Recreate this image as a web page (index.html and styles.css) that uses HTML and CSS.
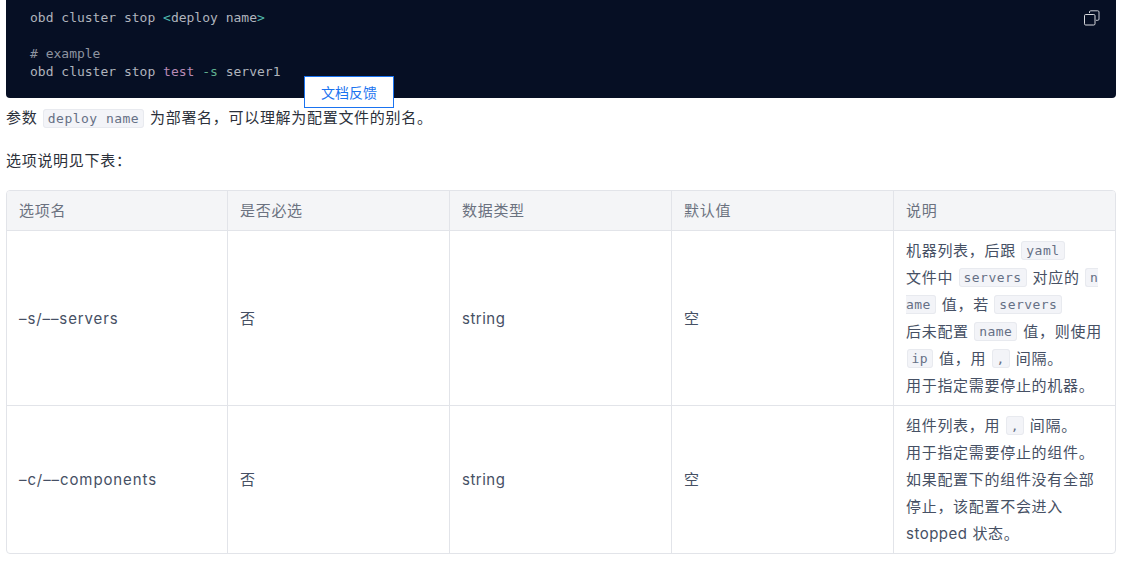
FILE: index.html
```html
<!DOCTYPE html>
<html lang="zh-CN">
<head>
<meta charset="utf-8">
<title>obd cluster stop</title>
<link rel="stylesheet" href="styles.css">
</head>
<body>
<main class="doc">
  <div class="code-block">
    <pre class="code"><span>obd cluster stop </span><span class="tag">&lt;</span><span>deploy name</span><span class="tag">&gt;</span>

<span class="comment"># example</span>
<span>obd cluster stop </span><span class="kw">test</span> <span class="flag">-s</span> <span>server1</span></pre>
    <svg class="copy" width="18" height="18" viewBox="0 0 18 18" fill="none">
      <path d="M6.5 4V3a1.2 1.2 0 0 1 1.2-1.2h7.1A1.2 1.2 0 0 1 16 3v7.1a1.2 1.2 0 0 1-1.2 1.2H13" stroke="#c9ccd3" stroke-width="1"/>
      <rect x="1.5" y="5.5" width="10.5" height="10.5" rx="1.2" stroke="#d8dade" stroke-width="1"/>
    </svg>
  </div>
  <button class="feedback" type="button">文档反馈</button>
  <p class="para first">参数 <code>deploy name</code> 为部署名，可以理解为配置文件的别名。</p>
  <p class="para second">选项说明见下表：</p>
  <div class="table-wrap">
    <table class="options">
      <colgroup><col class="col-first"><col class="col"><col class="col"><col class="col"><col class="col"></colgroup>
      <thead>
        <tr><th>选项名</th><th>是否必选</th><th>数据类型</th><th>默认值</th><th>说明</th></tr>
      </thead>
      <tbody>
        <tr>
          <td class="opt">–s/––servers</td><td>否</td><td class="latin">string</td><td>空</td>
          <td class="desc">机器列表，后跟 <code>yaml</code><br>文件中 <code>servers</code> 对应的 <code>name</code> 值，若 <code>servers</code><br>后未配置 <code>name</code> 值，则使用 <code>ip</code> 值，用 <code>,</code> 间隔。<br>用于指定需要停止的机器。</td>
        </tr>
        <tr>
          <td class="opt">–c/––components</td><td>否</td><td class="latin">string</td><td>空</td>
          <td class="desc">组件列表，用 <code>,</code> 间隔。<br>用于指定需要停止的组件。<br>如果配置下的组件没有全部停止，该配置不会进入 <span class="latin">stopped</span> 状态。</td>
        </tr>
      </tbody>
    </table>
  </div>
</main>
</body>
</html>
```
FILE: styles.css
```css
* { box-sizing: border-box; }
html, body { margin: 0; padding: 0; background: #fff; }
body {
  font-family: Inter, "Noto Sans CJK SC", sans-serif;
  font-size: 15px;
  color: #2b303a;
  overflow: hidden;
}
.doc { position: relative; padding: 0 6px; }
.code-block {
  position: relative;
  background: #060f24;
  border-radius: 0 0 4px 4px;
  height: 98px;
  padding: 9px 24px;
}
.code {
  margin: 0;
  font-family: "DejaVu Sans Mono", "Liberation Mono", monospace;
  font-size: 13px;
  line-height: 18px;
  color: #b0b4bd;
}
.tag { color: #4fb8ad; }
.comment { color: #8e94a0; }
.kw { color: #b98ab5; }
.flag { color: #5fae8e; }
.copy { position: absolute; top: 9px; right: 15px; }
.feedback {
  position: absolute;
  left: 304px;
  top: 76px;
  width: 90px;
  height: 32px;
  padding: 0;
  background: #fff;
  border: 1px solid #1a73f0;
  color: #1a73f0;
  font: 14px "Noto Sans CJK SC", sans-serif;
}
.para { margin: 0; line-height: 24px; letter-spacing: .7px; }
.first { padding-top: 8px; }
.second { padding-top: 19px; }
code {
  font-family: "DejaVu Sans Mono", "Liberation Mono", monospace;
  font-size: 13px;
  line-height: 1;
  color: #667085;
  background: #f3f4f8;
  border: 1px solid #e8eaef;
  border-radius: 3px;
  padding: 1px 4px;
  letter-spacing: .47px;
  margin: 0 1px 0 .5px;
  word-break: break-all;
}
.table-wrap {
  margin-top: 17px;
  border: 1px solid #e2e4e9;
  border-radius: 4px;
  overflow: hidden;
}
.options {
  width: 100%;
  table-layout: fixed;
  border-collapse: separate;
  border-spacing: 0;
}
.col-first { width: 220px; }
.col { width: 222px; }
th, td {
  border-left: 1px solid #e2e4e9;
  padding: 0 12px;
  text-align: left;
  line-height: 27px;
  letter-spacing: .7px;
}
th:first-child, td:first-child { border-left: 0; }
th {
  height: 40px;
  background: #f4f5f7;
  font-weight: 400;
  color: #6b7280;
  border-bottom: 1px solid #e2e4e9;
}
td {
  color: #465064;
  padding-top: 6px;
  padding-bottom: 6px;
}
td.desc { padding-right: 10px; }
td.desc code { vertical-align: 1px; }
td.opt { letter-spacing: .9px; }
.latin { letter-spacing: .5px; }
tbody tr + tr td { border-top: 1px solid #e2e4e9; }
```
